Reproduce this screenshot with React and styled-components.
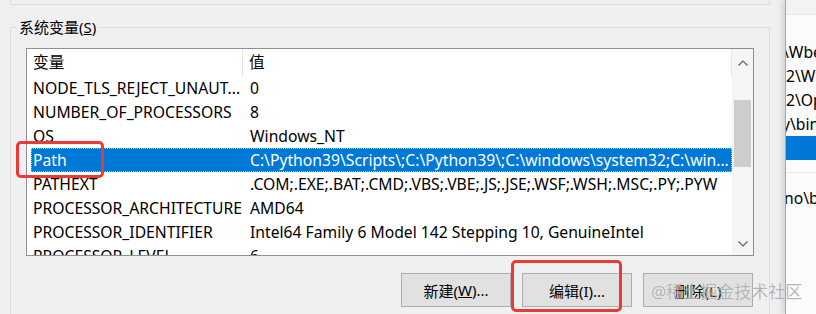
import React from "react";
import styled, { createGlobalStyle } from "styled-components";

const GlobalStyle = createGlobalStyle`
  body {
    margin: 0;
    font-family: "Noto Sans", "Noto Sans CJK SC", sans-serif;
    font-size: 15.7px;
    color: #000;
  }
`;

const variables = [
  { name: "NODE_TLS_REJECT_UNAUT...", value: "0" },
  { name: "NUMBER_OF_PROCESSORS", value: "8" },
  { name: "OS", value: "Windows_NT" },
  {
    name: "Path",
    value: "C:\\Python39\\Scripts\\;C:\\Python39\\;C:\\windows\\system32;C:\\win...",
    selected: true,
  },
  { name: "PATHEXT", value: ".COM;.EXE;.BAT;.CMD;.VBS;.VBE;.JS;.JSE;.WSF;.WSH;.MSC;.PY;.PYW" },
  { name: "PROCESSOR_ARCHITECTURE", value: "AMD64" },
  { name: "PROCESSOR_IDENTIFIER", value: "Intel64 Family 6 Model 142 Stepping 10, GenuineIntel" },
  { name: "PROCESSOR_LEVEL", value: "6" },
];

const sideRows = [
  { text: "\\Wbem", shift: -3 },
  { text: "2\\WindowsPowerShell\\v1.0\\", shift: 0 },
  { text: "2\\OpenSSH\\", shift: 0 },
  { text: "y\\bin", shift: -4 },
  { text: "", selected: true },
];

export default function App() {
  return (
    <>
      <GlobalStyle />
      <Screen>
        <Dialog>
          <PrevGroupEdge />
          <GroupBox>
            <Legend>
              系统变量(<u>S</u>)
            </Legend>
            <ListView>
              <ListContent>
                <Header>
                  <HeaderCell $first>变量</HeaderCell>
                  <HeaderCell>值</HeaderCell>
                </Header>
                {variables.map((v) => (
                  <Row key={v.name} $selected={v.selected}>
                    <NameCell>{v.name}</NameCell>
                    <ValueCell>{v.value}</ValueCell>
                  </Row>
                ))}
              </ListContent>
              <ScrollBar>
                <ArrowButton $height={28}>
                  <Chevron up />
                </ArrowButton>
                <Track>
                  <Thumb $offset={23} $size={67} />
                </Track>
                <ArrowButton $height={22}>
                  <Chevron />
                </ArrowButton>
              </ScrollBar>
            </ListView>
            <ButtonRow>
              <Button>
                新建(<u>W</u>)...
              </Button>
              <Button>编辑(I)...</Button>
              <Button>删除(L)</Button>
            </ButtonRow>
          </GroupBox>
        </Dialog>

        <SideWindow>
          <SideTop />
          <SideList>
            {sideRows.map((r, i) => (
              <SideRow key={i} $selected={r.selected} $shift={r.shift}>
                {r.text}
              </SideRow>
            ))}
            <SideSeparator />
            <SideRow $shift={-2}>no\bin</SideRow>
          </SideList>
        </SideWindow>

        <Marker $x={16} $y={141} $w={88} $h={37} />
        <Marker $x={511} $y={260} $w={111} $h={52} />
        <Watermark>@稀土掘金技术社区</Watermark>
      </Screen>
    </>
  );
}

function Chevron({ up }) {
  return (
    <svg width="10" height="6" viewBox="0 0 10 6">
      <path
        d={up ? "M0.5 5.5 L5 1 L9.5 5.5" : "M0.5 0.5 L5 5 L9.5 0.5"}
        fill="none"
        stroke="#606060"
        strokeWidth="1.2"
      />
    </svg>
  );
}

const Screen = styled.div`
  position: relative;
  width: 816px;
  height: 314px;
  overflow: hidden;
  display: flex;
  background: #f0f0f0;
`;

const Dialog = styled.div`
  flex: 0 0 785px;
  box-sizing: border-box;
  padding: 0 15px 0 10px;
`;

const PrevGroupEdge = styled.div`
  height: 4px;
  border: 1px solid #dcdcdc;
  border-top: none;
`;

const GroupBox = styled.fieldset`
  margin: 12px 0 0;
  padding: 11px 15px 20px;
  border: 1px solid #dcdcdc;
  min-width: 0;
`;

const Legend = styled.legend`
  margin-left: -9px;
  padding: 0 2px;
  line-height: 20px;
  font-size: 15px;
`;

const ListView = styled.div`
  height: 208px;
  box-sizing: border-box;
  border: 1px solid #8e9096;
  background: #fff;
  display: flex;
  overflow: hidden;
`;

const ListContent = styled.div`
  flex: 1;
  min-width: 0;
  overflow: hidden;
`;

const Header = styled.div`
  display: grid;
  grid-template-columns: 216px 1fr;
  height: 27px;
  border-right: 1px solid #e5e5e5;
  line-height: 27px;
`;

const HeaderCell = styled.div`
  padding-left: 6px;
  border-right: ${(p) => (p.$first ? "1px solid #e5e5e5" : "none")};
`;

const Row = styled.div`
  display: grid;
  grid-template-columns: 212px 1fr;
  height: 24px;
  line-height: 24px;
  margin-left: 4px;
  box-sizing: border-box;
  white-space: nowrap;
  background: ${(p) => (p.$selected ? "#0078d7" : "transparent")};
  color: ${(p) => (p.$selected ? "#fff" : "#000")};
  outline: ${(p) => (p.$selected ? "1px dotted #9ccbf0" : "none")};
  outline-offset: -1px;
`;

const NameCell = styled.div`
  padding-left: 2px;
  overflow: hidden;
`;

const ValueCell = styled.div`
  padding-left: 7px;
  overflow: hidden;
`;

const ScrollBar = styled.div`
  flex: 0 0 21px;
  display: flex;
  flex-direction: column;
  background: #f5f5f5;
`;

const ArrowButton = styled.div`
  height: ${(p) => p.$height}px;
  display: flex;
  align-items: center;
  justify-content: center;
`;

const Track = styled.div`
  flex: 1;
  padding: 0 2px;
`;

const Thumb = styled.div`
  margin-top: ${(p) => p.$offset}px;
  height: ${(p) => p.$size}px;
  background: #cdcdcd;
`;

const ButtonRow = styled.div`
  display: flex;
  justify-content: flex-end;
  gap: 11px;
  margin-top: 17px;
  margin-right: 1px;
`;

const Button = styled.div`
  width: 110px;
  height: 34px;
  box-sizing: border-box;
  border: 1px solid #adadad;
  background: #e1e1e1;
  display: flex;
  align-items: center;
  justify-content: center;
  font-size: 15px;
`;

const SideWindow = styled.div`
  flex: 1;
  background: #fbfbfb;
  border-left: 1px solid #a5a5a5;
  box-shadow: -3px 0 6px rgba(0, 0, 0, 0.12);
  overflow: hidden;
  z-index: 1;
`;

const SideTop = styled.div`
  height: 14px;
  background: #f3f3f3;
  border-bottom: 1px solid #e6e6e6;
`;

const SideList = styled.div`
  padding-top: 25px;
`;

const SideRow = styled.div`
  height: 24px;
  line-height: 24px;
  white-space: nowrap;
  margin-left: ${(p) => p.$shift || 0}px;
  background: ${(p) => (p.$selected ? "#0078d7" : "transparent")};
`;

const SideSeparator = styled.div`
  height: 12px;
  border-bottom: 1px solid #ececec;
  margin-bottom: 13px;
`;

const Marker = styled.div`
  position: absolute;
  left: ${(p) => p.$x}px;
  top: ${(p) => p.$y}px;
  width: ${(p) => p.$w}px;
  height: ${(p) => p.$h}px;
  box-sizing: border-box;
  border: 3px solid #ea3a36;
  border-radius: 5px;
  z-index: 2;
`;

const Watermark = styled.div`
  position: absolute;
  left: 651px;
  top: 280px;
  font-size: 17px;
  line-height: 24px;
  color: rgba(120, 120, 120, 0.55);
  text-shadow: 0 0 1px rgba(255, 255, 255, 0.8);
  white-space: nowrap;
  z-index: 3;
`;
